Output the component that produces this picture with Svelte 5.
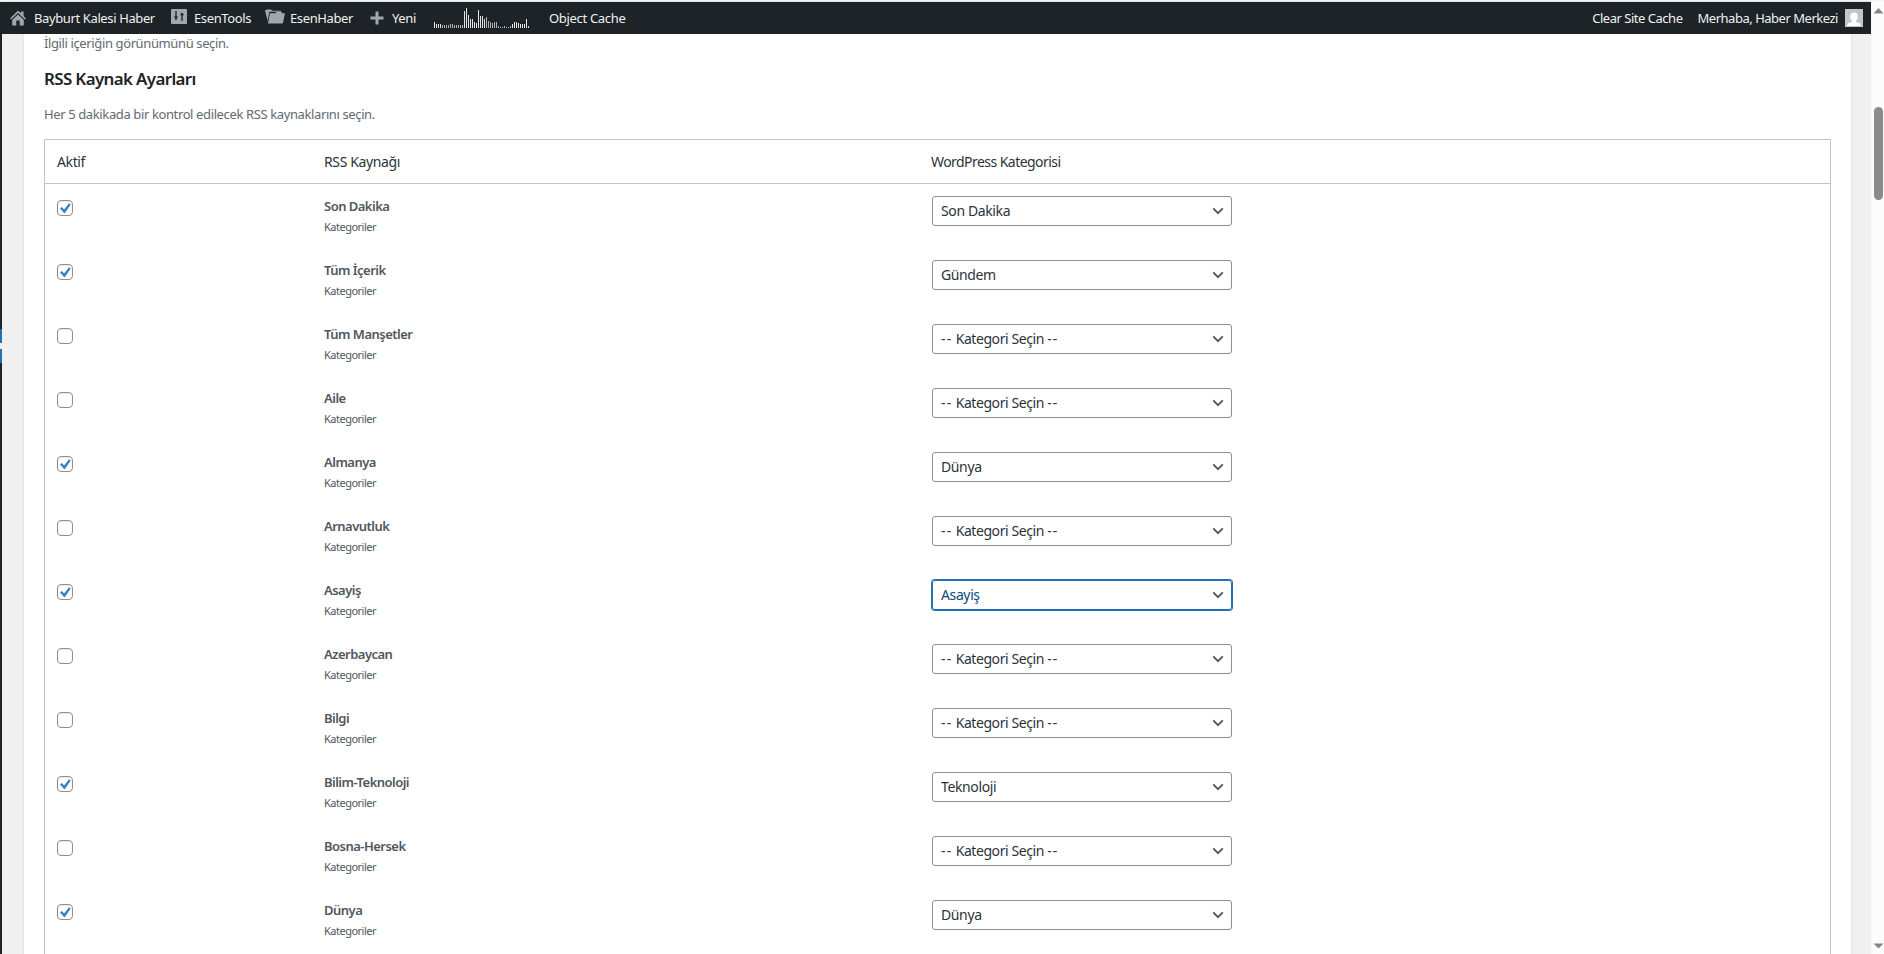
<script>
  const rows = [
    ['Son Dakika', true, 'Son Dakika'],
    ['Tüm İçerik', true, 'Gündem'],
    ['Tüm Manşetler', false, ''],
    ['Aile', false, ''],
    ['Almanya', true, 'Dünya'],
    ['Arnavutluk', false, ''],
    ['Asayiş', true, 'Asayiş'],
    ['Azerbaycan', false, ''],
    ['Bilgi', false, ''],
    ['Bilim-Teknoloji', true, 'Teknoloji'],
    ['Bosna-Hersek', false, ''],
    ['Dünya', true, 'Dünya']
  ];
  const bars = [6,4,4,4,3,3,3,3,4,4,3,3,3,3,3,17,20,13,9,9,6,5,18,12,12,9,11,7,6,5,6,6,2,1,1,2,1,1,2,4,6,6,5,4,4,4,9,2];
</script>

<div class="screen">
  <div class="menu-edge"><div class="current"><i></i></div></div>
  <div class="main">
    <header class="bar">
      <div class="group">
        <div class="item home">
          <svg width="16" height="16" viewBox="0 0 16 16" fill="#a2a7ac"><path d="M8 0.4 11 3.3V1.5h2.6v4.4L16 8.5l-1.2 1.1L8 3 1.2 9.6 0 8.5z" /><path d="M8 4.4 13.8 10v5.6H9.7v-5H6.3v5H2.2V10z" /></svg>
          <span>Bayburt Kalesi Haber</span>
        </div>
        <div class="item tools">
          <svg width="16" height="15" viewBox="0 0 16 15"><rect width="16" height="15" rx="1" fill="#a2a7ac" /><path d="M5 2v9M11 4v8" stroke="#1d2327" stroke-width="1.3" /><path d="M2.9 7.5h4.2L5 10.3zM8.9 6.3h4.2L11 3.5z" fill="#1d2327" /></svg>
          <span>EsenTools</span>
        </div>
        <div class="item news">
          <svg width="20" height="15" viewBox="0 0 20 15"><path d="M0 1.6 1.7.4H6l1.2 1.4H16v1H4.4L2.6 12z" fill="#a2a7ac" /><path d="M5 4.2h5.3l1-1.2h5.2l.6 1.2H20L17.8 14.6H3z" fill="#a2a7ac" /></svg>
          <span>EsenHaber</span>
        </div>
        <div class="item new">
          <svg width="14" height="14" viewBox="0 0 14 14"><path d="M7 .5v13M.5 7h13" stroke="#a2a7ac" stroke-width="3" /></svg>
          <span>Yeni</span>
        </div>
        <svg class="chart" width="96" height="22" viewBox="0 0 96 22">
          {#each bars as h, i}<rect x={i * 2} y={21 - h} width="1" height={h} fill={i > 3 && i < 15 || i > 25 && i < 39 ? '#aeb0b2' : '#e2e3e4'} />{/each}
        </svg>
        <span class="cache">Object Cache</span>
      </div>
      <div class="group right">
        <span class="clear">Clear Site Cache</span>
        <span class="hello">Merhaba, Haber Merkezi</span>
        <svg class="avatar" width="18" height="18" viewBox="0 0 18 18"><rect width="18" height="18" fill="#c3c5c8" /><ellipse cx="9" cy="7.8" rx="3.8" ry="4.3" fill="#fff" /><path d="M7 11h4v2l4 1.3 1 2.7H2l1-2.7L7 13z" fill="#fff" /></svg>
      </div>
    </header>
    <main class="card">
      <p class="desc first">İlgili içeriğin görünümünü seçin.</p>
      <h2>RSS Kaynak Ayarları</h2>
      <p class="desc second">Her 5 dakikada bir kontrol edilecek RSS kaynaklarını seçin.</p>
      <div class="table">
        <div class="row head"><span>Aktif</span><span>RSS Kaynağı</span><span class="wp">WordPress Kategorisi</span></div>
        {#each rows as [name, on, category], i}
          <div class="row">
            <div class="check">
              {#if on}<svg width="14" height="14" viewBox="0 0 14 14"><path d="M2 7.4 3.9 5.9l2.2 2.5 4.9-6.2 1.8 1.2-6.3 9.2z" fill="#3582c4" /></svg>{/if}
            </div>
            <div class="source"><strong>{name}</strong><small>Kategoriler</small></div>
            <div class="select" class:focus={i === 6}>
              {#if category}<span>{category}</span>{:else}<span class="none"><i>--</i> Kategori Seçin <i>--</i></span>{/if}
              <svg width="12" height="8" viewBox="0 0 12 8"><path d="m1.2 1.3 4.8 4.8 4.8-4.8" fill="none" stroke="#50575e" stroke-width="1.9" /></svg>
            </div>
          </div>
        {/each}
      </div>
    </main>
  </div>
  <div class="scroll">
    <svg width="11" height="6" viewBox="0 0 11 6"><path d="M5.5 0 10.5 5.5H.5z" fill="#858585" /></svg>
    <div class="thumb"></div>
    <svg width="11" height="6" viewBox="0 0 11 6"><path d="M.5.5h10l-5 5z" fill="#858585" /></svg>
  </div>
</div>

<style>
  :global(body) { margin: 0; overflow: hidden; }
  .screen { box-sizing: border-box; height: 954px; width: 1884px; border-top: 1px solid #f4f5f5; display: grid; grid-template-columns: 2px 1869px 13px; font: 13px/20px "Noto Sans", "Open Sans", sans-serif; letter-spacing: -.38px; overflow: hidden; background: #f0f0f1; color: #2c3338; white-space: nowrap; }
  .screen * { box-sizing: border-box; }
  .menu-edge { background: #1d2327; margin-top: 1px; padding-top: 327px; }
  .current { height: 34px; background: #2271b1; padding-top: 14px; }
  .current i { display: block; height: 6px; background: #f0f0f1; }
  .main { min-width: 0; overflow: hidden; border-top: 1px solid #dde3e6; }
  .bar { height: 32px; background: #1d2327; color: #f0f0f1; display: flex; justify-content: space-between; margin-left: -2px; }
  .bar svg { flex-shrink: 0; }
  .group { display: flex; align-items: center; height: 32px; }
  .item { display: flex; align-items: center; padding-left: 10px; }
  .home { width: 161px; gap: 8px; }
  .tools { width: 94px; gap: 7px; }
  .news { width: 105px; gap: 5px; }
  .new { width: 64px; gap: 8px; }
  .tools svg, .news svg { margin-bottom: 3px; }
  .chart { margin-left: 10px; margin-right: 19px; }
  .cache { letter-spacing: -.32px; }
  .right { letter-spacing: -.48px; }
  .avatar { margin-left: 7px; margin-right: 8px; }
  .clear { margin-right: 15px; }
  .card { margin-left: 22px; width: 1827px; height: 920px; background: #fff; padding: 0 20px; box-shadow: 0 0 1px 1px #e5e6e7; clip-path: inset(0 -2px); overflow: hidden; }
  p, h2 { margin: 0; }
  .desc { color: #646970; }
  .first { height: 20px; margin-top: -1px; }
  h2 { color: #1d2327; font-size: 16.9px; font-weight: 600; line-height: 24px; margin-top: 14px; letter-spacing: -.62px; }
  .second { margin-top: 13px; }
  .table { margin-top: 15px; border: 1px solid #c3c4c7; height: 900px; width: 1787px; }
  .row { display: grid; grid-template-columns: 267px 608px 300px; height: 64px; padding: 12px 0 0 12px; }
  .head { height: 44px; border-bottom: 1px solid #c3c4c7; font-size: 14px; }
  .wp { letter-spacing: -.55px; margin-left: -1px; }
  .check { width: 16px; height: 16px; margin-top: 4px; border: 1px solid #8c8f94; border-radius: 4px; box-shadow: inset 0 1px 2px #0000001a; }
  .check svg { display: block; }
  .source { display: flex; flex-direction: column; color: #50575e; }
  strong { font-weight: 600; line-height: 20px; letter-spacing: -.52px; }
  small { font-size: 11px; line-height: 20px; margin-top: 1px; letter-spacing: -.5px; }
  .select { width: 300px; height: 30px; border: 1px solid #8c8f94; border-radius: 3px; display: flex; align-items: center; justify-content: space-between; padding: 0 7px 0 8px; font-size: 14px; }
  .none { letter-spacing: -.42px; }
  .none i { font-style: normal; letter-spacing: 1.2px; }
  .focus { border-color: #2271b1; box-shadow: 0 0 0 1px #2271b1; color: #0a4b78; }
  .scroll { background: #fcfcfc; border-left: 1px solid #f8f8f8; padding-top: 7px; height: 953px; display: flex; flex-direction: column; align-items: center; }
  .thumb { width: 9px; height: 93px; border-radius: 5px; background: #8b8b8b; margin: 93px 0 auto 1px; }
  .scroll svg:last-child { margin-bottom: 5px; }
</style>
